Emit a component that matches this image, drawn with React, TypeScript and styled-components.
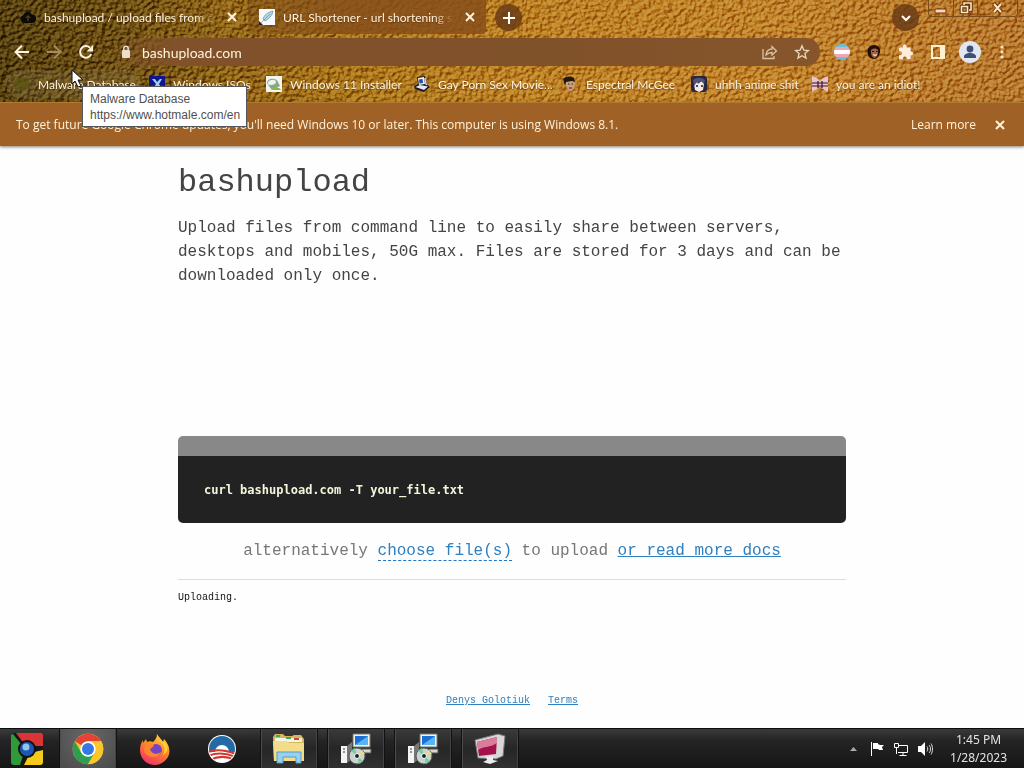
import React from "react";
import styled, { createGlobalStyle } from "styled-components";

const GlobalStyle = createGlobalStyle`
  *, *::before, *::after { box-sizing: border-box; }
  body { margin: 0; background: #fefefe; }
  button { border: 0; padding: 0; background: none; color: inherit; font: inherit; }
  svg { display: block; flex: none; }
`;

const ui = `Lato, "Liberation Sans", sans-serif`;
const mono = `"Liberation Mono", "Courier New", monospace`;
const cream = "#fff3dc";

const Screen = styled.div`
  min-height: 100vh;
  display: flex;
  flex-direction: column;
  font-family: ${ui};
  font-size: 12px;
`;

/* ---------- browser frame ---------- */

const Frame = styled.header`
  position: relative;
  display: grid;
  color: ${cream};
  text-shadow: 0 1px 1px rgba(60, 30, 0, 0.5);
`;

const Backdrop = styled.svg`
  grid-area: 1 / 1;
  width: 100%;
  height: 100%;
  min-height: 0;
  contain: size;
`;

const Grain = styled.rect`
  mix-blend-mode: soft-light;
`;

const FrameRows = styled.div`
  grid-area: 1 / 1;
  position: relative;
  display: flex;
  flex-direction: column;
  min-width: 0;
`;

const TabStrip = styled.div`
  display: flex;
  height: 38px;
  align-items: flex-start;
`;

const Tab = styled.div<{ $active?: boolean }>`
  display: flex;
  align-items: center;
  width: ${(p) => (p.$active ? "248px" : "238px")};
  height: 34px;
  padding: 0 8px 0 ${(p) => (p.$active ? "20px" : "11px")};
  gap: 8px;
  border-radius: 0 0 4px 4px;
  background: ${(p) => (p.$active ? "transparent" : "linear-gradient(90deg, rgba(110, 66, 22, 0.35), rgba(134, 78, 26, 0.85) 40%)")};
`;

const TabTitle = styled.span`
  flex: 1;
  min-width: 0;
  overflow: hidden;
  white-space: nowrap;
  mask-image: linear-gradient(90deg, #000 88%, transparent);
`;

const IconButton = styled.button`
  display: flex;
  align-items: center;
  justify-content: center;
  width: 16px;
  height: 16px;
  flex: none;
`;

const RoundButton = styled(IconButton)`
  width: 27px;
  height: 27px;
  margin: 4px 9px;
  border-radius: 50%;
  background: rgba(106, 60, 22, 0.85);
`;

const WindowControls = styled.div`
  display: flex;
  height: 17px;
  margin-right: 6px;
  border: 1px solid #7c4c17;
  border-top: 0;
  border-radius: 0 0 4px 4px;
`;

const WindowButton = styled.button<{ $wide?: boolean }>`
  display: grid;
  place-items: center;
  width: ${(p) => (p.$wide ? 40 : 24)}px;
  & + & { border-left: 1px solid #7c4c17; }
`;

const Spacer = styled.div`
  flex: 1;
`;

const Toolbar = styled.div`
  display: flex;
  align-items: center;
  height: 28px;
  padding: 0 14px;
`;

const NavButtons = styled.div`
  display: flex;
  gap: 16px;
  margin-right: 18px;
`;

const Omnibox = styled.div`
  flex: 1;
  min-width: 0;
  display: flex;
  align-items: center;
  gap: 8px;
  height: 28px;
  padding: 0 10px 0 6px;
  border-radius: 14px;
  background: linear-gradient(90deg, rgba(130, 80, 36, 0) 0, #80512a 60px, #80522a 60%, #86552b);
`;

const Address = styled.input`
  flex: 1;
  min-width: 0;
  border: 0;
  padding: 0;
  outline: 0;
  background: none;
  color: ${cream};
  font: 14px ${ui};
`;

const PageActions = styled.div`
  display: flex;
  gap: 16px;
`;

const Extensions = styled.div`
  display: flex;
  align-items: center;
  gap: 16px;
  margin-left: 14px;
`;

const Bookmarks = styled.nav`
  display: grid;
  grid-template-columns: 135px 117px 148px 148px 129px 121px 122px;
  align-items: center;
  height: 36px;
  padding: 0 6px;
`;

const Bookmark = styled.a<{ $hovered?: boolean }>`
  display: flex;
  align-items: center;
  gap: 8px;
  height: 28px;
  padding: 0 8px;
  border-radius: 14px;
  color: inherit;
  text-decoration: none;
  white-space: nowrap;
  background: ${(p) => (p.$hovered ? "rgba(150, 130, 90, 0.22)" : "none")};
`;

const InfoBar = styled.div`
  position: relative;
  display: flex;
  align-items: center;
  gap: 16px;
  height: 44px;
  padding: 0 16px;
  color: ${cream};
  background: #a06127;
  border-top: 1px solid #b07a33;
  box-shadow: 0 1px 3px rgba(90, 70, 40, 0.7);
  font-family: "Open Sans", ${ui};
`;

const InfoText = styled.span`
  flex: 1;
`;

const InfoLink = styled.a`
  color: inherit;
  text-decoration: none;
`;

const Tooltip = styled.div`
  position: absolute;
  z-index: 3;
  left: 82px;
  top: 86px;
  padding: 4px 6px 3px 7px;
  border: 1px solid #565656;
  background: #fff;
  color: #505050;
  font: 12px/16px "Liberation Sans", sans-serif;
  white-space: nowrap;
  text-shadow: none;
`;

const Cursor = styled.svg`
  position: absolute;
  z-index: 4;
  left: 71px;
  top: 69px;
`;

/* ---------- page ---------- */

const Page = styled.main`
  flex: 1;
  display: flex;
  flex-direction: column;
  width: 100%;
  max-width: 668px;
  margin: 0 auto;
  color: #444;
  font-family: ${mono};
  font-size: 16px;
  line-height: 24px;
`;

const Title = styled.h1`
  margin: 17px 0 13px;
  font-size: 32px;
  font-weight: 400;
  line-height: 40px;
`;

const Lead = styled.p`
  margin: 0 0 148px;
`;

const CodeBox = styled.pre`
  margin: 0;
  padding: 24px 26px 23px;
  border-top: 20px solid #888;
  border-radius: 5px;
  background: #222;
  color: #f5f5dc;
  font: bold 12px/20px "DejaVu Sans Mono", ${mono};
`;

const Alternative = styled.p`
  margin: 16px 0;
  text-align: center;
  color: #777;
`;

const PageLink = styled.a<{ $dashed?: boolean }>`
  color: #2f80c0;
  text-decoration: ${(p) => (p.$dashed ? "none" : "underline")};
  border-bottom: ${(p) => (p.$dashed ? "1px dashed #1f78c4" : "0")};
`;

const Status = styled.p`
  margin: 0;
  padding-top: 10px;
  border-top: 1px solid #ddd;
  font-size: 10px;
  line-height: 16px;
  color: #111;
`;

const PageFooter = styled.footer`
  display: flex;
  justify-content: center;
  gap: 18px;
  margin-top: auto;
  padding-bottom: 19px;
  font-size: 10px;
  line-height: 16px;
`;

/* ---------- taskbar ---------- */

const Taskbar = styled.footer`
  display: flex;
  gap: 9px;
  height: 40px;
  background: linear-gradient(#3a3a3a, #242424 30%, #161616);
  border-top: 1px solid #0c0c0c;
  color: #e4e4e4;
`;

const TaskButton = styled.button<{ $state?: "open" | "active" }>`
  display: grid;
  place-items: center;
  width: 58px;
  border: solid #111;
  border-width: 0 ${(p) => (p.$state ? 1 : 0)}px;
  background: ${(p) =>
    p.$state === "active"
      ? "radial-gradient(circle at 50% 20%, #686868, #4a4a4a)"
      : p.$state === "open"
        ? "linear-gradient(#3a3a3a, #262626 50%, #303030)"
        : "none"};
  box-shadow: ${(p) => (p.$state ? "inset 1px 0 #4c4c4c, inset -1px 0 #444" : "none")};
`;

const FirstTaskButton = styled(TaskButton)`
  width: 50px;
  padding-left: 4px;
`;

const Tray = styled.div`
  display: flex;
  align-items: center;
  gap: 8px;
  margin-left: auto;
  padding-right: 17px;
`;

const Clock = styled.time`
  margin-left: 9px;
  font: 12px/18px "Noto Sans", sans-serif;
  text-align: center;
`;

/* ---------- drawings ---------- */

const Leather = () => (
  <Backdrop aria-hidden="true">
    <defs>
      <linearGradient id="hide">
        <stop offset="0" stopColor="#59420f" />
        <stop offset=".12" stopColor="#705012" />
        <stop offset=".22" stopColor="#926616" />
        <stop offset=".34" stopColor="#ac781a" />
        <stop offset=".5" stopColor="#bd8323" />
        <stop offset=".75" stopColor="#c28529" />
        <stop offset="1" stopColor="#b97a2d" />
      </linearGradient>
      <filter id="grain" x="0" y="0" width="100%" height="100%" colorInterpolationFilters="sRGB">
        <feTurbulence type="fractalNoise" baseFrequency=".24 .27" numOctaves="2" seed="8" />
        <feDiffuseLighting surfaceScale="4" diffuseConstant=".72" lightingColor="#fff">
          <feDistantLight azimuth="225" elevation="50" />
        </feDiffuseLighting>
      </filter>
    </defs>
    <rect width="100%" height="100%" fill="url(#hide)" />
    <Grain width="100%" height="100%" filter="url(#grain)" />
  </Backdrop>
);

const Close = () => (
  <svg width="16" height="16" viewBox="0 0 16 16" stroke={cream} strokeWidth="2">
    <path d="M4 4l8 8M12 4l-8 8" />
  </svg>
);

const Cloud = () => (
  <svg width="16" height="16" viewBox="0 0 16 16">
    <path d="M4 14a4 4 0 0 1-.6-7.800A4.600 4.600 0 0 1 12 5.400 4.200 4.200 0 0 1 12 14z" fill="#0d0b08" />
    <path d="M8 12V7M5.600 9L8 6.600 10.400 9" stroke="#6b5120" fill="none" />
  </svg>
);

const Feather = () => (
  <svg width="16" height="16" viewBox="0 0 16 16">
    <path d="M0 0h16v16H0z" fill="#f6fafa" />
    <path d="M4 10C5 6 9 3 14 2c-1 5-4 8-8 10z" fill="#b4d3dc" stroke="#6d909f" strokeWidth=".7" />
    <path d="M2 14L11 5" stroke="#7795a2" strokeWidth=".7" />
    <path d="M0 12l4 4H0z" fill="#222" />
  </svg>
);

const Arrow = ({ flip }: { flip?: boolean }) => (
  <svg width="16" height="16" viewBox="0 0 16 16" fill="none" stroke={flip ? "#a88c5c" : cream} strokeWidth="2">
    <path d={flip ? "M1 8h13M8 1.500L14.500 8 8 14.500" : "M15 8H2M8 1.500L1.500 8 8 14.500"} />
  </svg>
);

const Reload = () => (
  <svg width="16" height="16" viewBox="0 0 16 16">
    <path d="M13.200 10.200A5.800 5.800 0 1 1 12 3.800" fill="none" stroke={cream} strokeWidth="2" />
    <path d="M15 1v6.500H8.500z" fill={cream} />
  </svg>
);

const Lock = () => (
  <svg width="16" height="16" viewBox="0 0 16 16">
    <rect x="4" y="6" width="8" height="8" rx="1" fill="#eadfce" />
    <path d="M5.800 6.500V4.500a2.200 2.200 0 0 1 4.400 0v2" fill="none" stroke="#eadfce" strokeWidth="1.500" />
  </svg>
);

const Share = () => (
  <svg width="16" height="16" viewBox="0 0 16 16" fill="none" stroke="#d9c3a4" strokeWidth="1.300">
    <path d="M1 5v9.500h11V12M4 11c.5-4 3-6 6-6V2.500L14.500 7 10 11V8.500C7 8.500 5.500 9.500 4 11z" />
  </svg>
);

const Star = () => (
  <svg width="16" height="16" viewBox="0 0 16 16" fill="none" stroke="#ead8bc" strokeWidth="1.300">
    <path d="M8 1.800l1.800 4.300 4.700.4-3.600 3 1.100 4.600L8 11.700l-4 2.400 1.100-4.600-3.600-3 4.700-.4z" />
  </svg>
);

const PrideFlag = () => (
  <svg width="16" height="16" viewBox="0 0 16 16">
    <clipPath id="flagRound"><circle cx="8" cy="8" r="8" /></clipPath>
    <g clipPath="url(#flagRound)">
      <path d="M0 0h16v16H0z" fill="#69bfe0" />
      <path d="M0 3h16v10H0z" fill="#efa6b2" />
      <path d="M0 6h16v4H0z" fill="#fff" />
    </g>
  </svg>
);

const Face = () => (
  <svg width="16" height="16" viewBox="0 0 16 16">
    <path d="M8 1c4 0 7 3 6 7-.4 3-3 7-5 7-5 0-7-3-7.500-6C1 4 4 1 8 1z" fill="#24100a" />
    <path d="M5 6c2-2 5-2 7 0 .5 4-1 7-3 8-3 0-4.500-4-4-8z" fill="#a86542" />
    <path d="M6 7.500h2M10 7.500h1.500" stroke="#301208" />
    <path d="M7 10.500c1 1 3 1 4 0" stroke="#fff" fill="none" />
  </svg>
);

const Puzzle = () => (
  <svg width="16" height="16" viewBox="0 0 16 16">
    <path d="M13.500 7.500h-.8V4.700c0-.7-.6-1.300-1.300-1.300H8.700v-.9a1.900 1.900 0 0 0-3.800 0v.9H2.300C1.500 3.400 1 4 1 4.700v2.600h.9a2 2 0 0 1 0 4H1V14c0 .7.500 1.300 1.300 1.300h2.600v-.9a2 2 0 0 1 4 0v.9h2.500c.7 0 1.300-.6 1.300-1.300v-2.600h.8a2 2 0 0 0 0-3.900z" fill="#ffecdb" />
  </svg>
);

const SidePanel = () => (
  <svg width="16" height="16" viewBox="0 0 16 16">
    <path fillRule="evenodd" d="M1 1h14v14H1zM3 3v10h7V3z" fill="#fff0cd" />
  </svg>
);

const Avatar = () => (
  <svg width="22" height="22" viewBox="0 0 22 22">
    <circle cx="11" cy="11" r="11" fill="#e2e6ee" />
    <circle cx="11" cy="8" r="3.400" fill="#3e4f7c" />
    <path d="M5 17v-1.500c0-2.200 3-3.500 6-3.500s6 1.300 6 3.500V17z" fill="#3e4f7c" />
  </svg>
);

const Dots = () => (
  <svg width="16" height="16" viewBox="0 0 16 16" fill="#ffe7bd">
    <circle cx="8" cy="3" r="1.600" /><circle cx="8" cy="8" r="1.600" /><circle cx="8" cy="13" r="1.600" />
  </svg>
);

const SiteIcon = ({ kind }: { kind: string }) => (
  <svg width="16" height="16" viewBox="0 0 16 16">
    {kind === "malware" && <ellipse cx="8" cy="8" rx="8" ry="7" fill="#5b5413" opacity=".7" />}
    {kind === "iso" && (
      <>
        <path d="M0 0h16v16H0z" fill="#10168f" />
        <path d="M3 3h3l2 3 3-3h2l-3 5 3 5h-3l-2-3-2 3H4l3-5z" fill="#9fd0f0" />
        <path d="M1 12l3-2M15 12l-3-2" stroke="#3a57d0" strokeWidth="2" />
      </>
    )}
    {kind === "win11" && (
      <>
        <path d="M0 0h16v16H0z" fill="#f2f5ec" />
        <path d="M1 7c0-5 9-6 11-1l2 4-4 2-5 1z" fill="#8ca48b" />
        <path d="M2 6c2-3 8-3 8 0s-6 4-8 2z" fill="#eef2ec" />
        <path d="M5 14c3-4 8-3 10 0z" fill="#7fbe3a" />
      </>
    )}
    {kind === "pc" && (
      <>
        <path d="M3 1l8-1 2 8 3 3-6 5-9-3-1-3 4-2z" fill="#181a24" />
        <path d="M4 2l6-1 1 7-6 1z" fill="#f3f0e2" />
        <path d="M5 3.500l3.500-.5.5 4-3.500.5z" fill="#2847b0" />
        <path d="M1.500 11L6 9l8 1.500-4 3.500z" fill="#e4e6f0" />
        <path d="M11 2l1 6 1 1" stroke="#c8d2ee" strokeWidth="1.500" fill="none" />
      </>
    )}
    {kind === "mcgee" && (
      <>
        <path d="M4 5h8l1 4-3 6H7L4 10z" fill="#c9a07c" />
        <path d="M1 3c4-3 7-3 11-1l1 4-3-1-6 1-1 4z" fill="#231712" />
        <path d="M6 8h1.500M9.500 8H11M7 12h3" stroke="#442316" />
      </>
    )}
    {kind === "anime" && (
      <>
        <rect width="16" height="16" rx="3" fill="#27263f" />
        <path d="M3 8l3-2 2 1 3-2 2 3-1 6-4 2-4-2z" fill="#f4ebe9" />
        <path d="M2 4c3-3 9-3 12 0l-1 4-3-3-3 3-1-2-3 4z" fill="#525273" />
        <path d="M6 9v2M11 9v2" stroke="#16172d" strokeWidth="1.500" />
      </>
    )}
    {kind === "idiot" && (
      <>
        <path d="M0 0l5 2 3 3 3-3 5-2v16l-5-3-3-2-3 2-5 3z" fill="#e8c5c8" />
        <path d="M0 7h16M0 10h16M6 5v7M10 5v7" stroke="#38112c" strokeWidth="1.200" />
      </>
    )}
  </svg>
);

const OldChrome = () => (
  <svg width="34" height="34" viewBox="0 0 34 34">
    <rect x="1" y="1" width="32" height="32" rx="4" fill="#161616" />
    <path d="M6 1h25a2 2 0 0 1 2 2v11H20L12 9z" fill="#da3437" />
    <path d="M3 2l12 15-5 16H4a3 3 0 0 1-3-3V3z" fill="#2f9a3a" />
    <path d="M33 18v12a3 3 0 0 1-3 3H14l6-12z" fill="#f4cb1b" />
    <circle cx="17" cy="17" r="9" fill="#111" />
    <circle cx="17" cy="17" r="7" fill="#1d57b4" />
    <circle cx="16" cy="15" r="3.500" fill="#8fc4ef" />
  </svg>
);

const Chrome = () => (
  <svg width="32" height="32" viewBox="0 0 48 48">
    <circle cx="24" cy="24" r="23" fill="#f4c52a" />
    <path d="M24 24L4.100 12.500A23 23 0 0 1 43.900 12.500H24z" fill="#e34335" />
    <path d="M4.100 12.500A23 23 0 0 0 24 47l10-17.300L24 24 14 29.700z" fill="#2f9e50" />
    <path d="M43.900 12.500H24v11.500l10 5.700L24 47A23 23 0 0 0 43.900 12.500z" fill="#fbc72c" />
    <circle cx="24" cy="24" r="11.500" fill="#fff" />
    <circle cx="24" cy="24" r="9" fill="#3577e5" />
  </svg>
);

const Firefox = () => (
  <svg width="32" height="32" viewBox="0 0 32 32">
    <defs>
      <linearGradient id="fox" x1=".8" y1="0" x2=".3" y2="1">
        <stop offset="0" stopColor="#ffe33d" /><stop offset=".45" stopColor="#ff8a26" /><stop offset="1" stopColor="#f0306b" />
      </linearGradient>
    </defs>
    <path d="M18 1c1 3 5 5 6 8l1-3c5 5 7 12 4 18-3 5-8 8-13 8C7 32 1 25 1 17c0-4 1-7 3-10v3l3-4 1 3c2-1 4-1 6 0 2-2 4-4 4-8z" fill="url(#fox)" />
    <circle cx="17" cy="17" r="6" fill="#7841ca" />
    <path d="M6 13c3-3 7-2 9 0l-4 3c1 5 7 6 11 3-1 6-14 7-17-1z" fill="#ff862c" />
    <path d="M20 8c6 3 7 9 4 14 8-5 4-14-4-14z" fill="#ffd13a" />
  </svg>
);

const Sunrise = () => (
  <svg width="28" height="28" viewBox="0 0 28 28">
    <clipPath id="sunRound"><circle cx="14" cy="14" r="13" /></clipPath>
    <circle cx="14" cy="14" r="14" fill="#fff" />
    <g clipPath="url(#sunRound)">
      <path d="M0 17V0h28v17h-7a7 7 0 0 0-14 0z" fill="#246ba6" />
      <path d="M0 17c8-3 18-2 28 2M0 21c9-4 18-3 28 1M2 25c8-4 17-4 25 0" stroke="#cf3a32" strokeWidth="2" fill="none" />
    </g>
  </svg>
);

const Explorer = () => (
  <svg width="34" height="32" viewBox="0 0 34 32">
    <path d="M1 4l2-3h8l2 2h7l2-1h7l3 4v22H2z" fill="#d6b65a" />
    <path d="M3 5h27v4H3z" fill="#f5f5e9" />
    <path d="M4 3h4M14 5h5" stroke="#45a45a" strokeWidth="2" />
    <path d="M22 6h5" stroke="#ce4433" strokeWidth="2" />
    <path d="M1 8h14l2 2h15v18H2z" fill="#f2dd8c" />
    <path d="M5 30V19h24v11h-5v-6H11v6z" fill="#9ccfe9" stroke="#4e9dcb" />
  </svg>
);

const Installer = () => (
  <svg width="32" height="32" viewBox="0 0 32 32">
    <path d="M13 1h17v13H13z" fill="#f4f4ec" stroke="#777" />
    <path d="M15 3h13v9H15z" fill="#1870d6" />
    <path d="M15 12l13-9v9z" fill="#58b4f5" />
    <path d="M12 16h19v4H12z" fill="#d6d6ce" stroke="#555" />
    <path d="M1 13h6v17H1z" fill="#f4f4f4" /><path d="M7 13l5-4v17l-5 4z" fill="#777" />
    <path d="M3 16h2M3 19h2" stroke="#333" />
    <circle cx="17" cy="23" r="8" fill="#c9d3cf" stroke="#555" />
    <path d="M17 23l-6-5 4-3zM17 23l6 5-4 3z" fill="#73cf9c" />
    <path d="M17 23l5-6 3 4z" fill="#ecd990" />
    <circle cx="17" cy="23" r="2.500" fill="#222" stroke="#fff" />
  </svg>
);

const Monitor = () => (
  <svg width="32" height="32" viewBox="0 0 32 32">
    <path d="M1 7L24 1l7 2-2 20-7 3L4 25z" fill="#d9d6da" stroke="#777" />
    <path d="M3 9l20-5-1 17L5 23z" fill="#a3124a" />
    <path d="M3 9l20-5v6C16 15 9 13 4 17z" fill="#dc7c9b" />
    <path d="M12 24l7-1v4l5 1-8 3-7-2 4-2z" fill="#ecebed" />
  </svg>
);

const bookmarks = [
  ["malware", "Malware Database"],
  ["iso", "Windows ISOs"],
  ["win11", "Windows 11 Installer"],
  ["pc", "Gay Porn Sex Movie..."],
  ["mcgee", "Espectral McGee"],
  ["anime", "uhhh anime shit"],
  ["idiot", "you are an idiot!"],
];

export default function App() {
  return (
    <Screen>
      <GlobalStyle />
      <Frame>
        <Leather />
        <FrameRows>
          <TabStrip>
            <Tab $active>
              <Cloud />
              <TabTitle>bashupload / upload files from co</TabTitle>
              <IconButton aria-label="Close tab"><Close /></IconButton>
            </Tab>
            <Tab>
              <Feather />
              <TabTitle>URL Shortener - url shortening sc</TabTitle>
              <IconButton aria-label="Close tab"><Close /></IconButton>
            </Tab>
            <RoundButton aria-label="New tab">
              <svg width="14" height="14" viewBox="0 0 14 14" stroke="#fff" strokeWidth="2"><path d="M7 1v12M1 7h12" /></svg>
            </RoundButton>
            <Spacer />
            <RoundButton aria-label="Search tabs">
              <svg width="12" height="12" viewBox="0 0 12 12" fill="none" stroke="#fff" strokeWidth="2"><path d="M2 4l4 4 4-4" /></svg>
            </RoundButton>
            <WindowControls>
              <WindowButton aria-label="Minimize">
                <svg width="14" height="14" viewBox="0 0 14 14"><rect x="1" y="8" width="11" height="4" rx="1" fill="#fbd6bb" stroke="#6b3410" /></svg>
              </WindowButton>
              <WindowButton aria-label="Restore">
                <svg width="14" height="14" viewBox="0 0 14 14" fill="none">
                  <path d="M5 4V2h7v7h-2M2.500 5.500h6v6h-6z" stroke="#5e3411" strokeWidth="3.500" />
                  <path d="M5 4V2h7v7h-2M2.500 5.500h6v6h-6z" stroke="#ffe6bf" strokeWidth="1.600" />
                </svg>
              </WindowButton>
              <WindowButton $wide aria-label="Close">
                <svg width="14" height="14" viewBox="0 0 14 14">
                  <path d="M3 3l7 8M10 3l-7 8" stroke="#5e3411" strokeWidth="4" />
                  <path d="M3 3l7 8M10 3l-7 8" stroke="#ffe6bf" strokeWidth="2" />
                </svg>
              </WindowButton>
            </WindowControls>
          </TabStrip>
          <Toolbar>
            <NavButtons>
              <IconButton aria-label="Back"><Arrow /></IconButton>
              <IconButton aria-label="Forward"><Arrow flip /></IconButton>
              <IconButton aria-label="Reload"><Reload /></IconButton>
            </NavButtons>
            <Omnibox>
              <Lock />
              <Address aria-label="Address" defaultValue="bashupload.com" />
              <PageActions>
                <IconButton aria-label="Share"><Share /></IconButton>
                <IconButton aria-label="Bookmark this page"><Star /></IconButton>
              </PageActions>
            </Omnibox>
            <Extensions>
              <IconButton aria-label="Flag extension"><PrideFlag /></IconButton>
              <IconButton aria-label="Portrait extension"><Face /></IconButton>
              <IconButton aria-label="Extensions"><Puzzle /></IconButton>
              <IconButton aria-label="Side panel"><SidePanel /></IconButton>
              <IconButton aria-label="Profile"><Avatar /></IconButton>
              <IconButton aria-label="Menu"><Dots /></IconButton>
            </Extensions>
          </Toolbar>
          <Bookmarks aria-label="Bookmarks">
            {bookmarks.map(([kind, label], i) => (
              <Bookmark key={kind} href="#" $hovered={i === 0}>
                <SiteIcon kind={kind} />
                {label}
              </Bookmark>
            ))}
          </Bookmarks>
        </FrameRows>
        <Cursor width="14" height="20" viewBox="0 0 14 20" aria-hidden="true">
          <path d="M1 1v14l3-3 3 6 3-1-3-6h5z" fill="#fff" stroke="#111" />
        </Cursor>
        <Tooltip role="tooltip">
          Malware Database
          <br />
          https://www.hotmale.com/en
        </Tooltip>
      </Frame>
      <InfoBar>
        <InfoText>
          To get future Google Chrome updates, you'll need Windows 10 or later. This computer is using Windows 8.1.
        </InfoText>
        <InfoLink href="#">Learn more</InfoLink>
        <IconButton aria-label="Dismiss"><Close /></IconButton>
      </InfoBar>
      <Page>
        <Title>bashupload</Title>
        <Lead>
          Upload files from command line to easily share between servers, desktops and mobiles, 50G max. Files are
          stored for 3 days and can be downloaded only once.
        </Lead>
        <CodeBox>curl bashupload.com -T your_file.txt</CodeBox>
        <Alternative>
          alternatively <PageLink href="#" $dashed>choose file(s)</PageLink> to upload{" "}
          <PageLink href="#">or read more docs</PageLink>
        </Alternative>
        <Status>Uploading.</Status>
        <PageFooter>
          <PageLink href="#">Denys Golotiuk</PageLink>
          <PageLink href="#">Terms</PageLink>
        </PageFooter>
      </Page>
      <Taskbar>
        <FirstTaskButton aria-label="Classic Chrome"><OldChrome /></FirstTaskButton>
        <TaskButton $state="active" aria-label="Chrome"><Chrome /></TaskButton>
        <TaskButton aria-label="Firefox"><Firefox /></TaskButton>
        <TaskButton aria-label="Sunrise"><Sunrise /></TaskButton>
        <TaskButton $state="open" aria-label="Explorer"><Explorer /></TaskButton>
        <TaskButton $state="open" aria-label="Installer"><Installer /></TaskButton>
        <TaskButton $state="open" aria-label="Installer, second window"><Installer /></TaskButton>
        <TaskButton $state="open" aria-label="Display"><Monitor /></TaskButton>
        <Tray>
          <svg width="16" height="16" viewBox="0 0 16 16"><path d="M5 10h7L8.500 6z" fill="#aaa" /></svg>
          <svg width="16" height="16" viewBox="0 0 16 16" fill="#fff"><path d="M2 1h1v14H2zM4 2h5v1l2 1h4l-2 2 1 3h-4L9 8H4z" /></svg>
          <svg width="16" height="16" viewBox="0 0 16 16" fill="none" stroke="#fff">
            <path d="M5.500 4.500h9v7H5M10 12v2M6.500 14.500h7M1.500 2.500h4v4h-4zM3.500 7v6" />
          </svg>
          <svg width="16" height="16" viewBox="0 0 16 16">
            <path d="M1 5h3l4-4v14l-4-4H1z" fill="#fff" />
            <path d="M10 5.500c1 1 1 4 0 5M12 4c2 2 2 6 0 8M14 2.500c2 3 2 8 0 11" fill="none" stroke="#ddd" />
          </svg>
          <Clock>
            1:45 PM
            <br />
            1/28/2023
          </Clock>
        </Tray>
      </Taskbar>
    </Screen>
  );
}
